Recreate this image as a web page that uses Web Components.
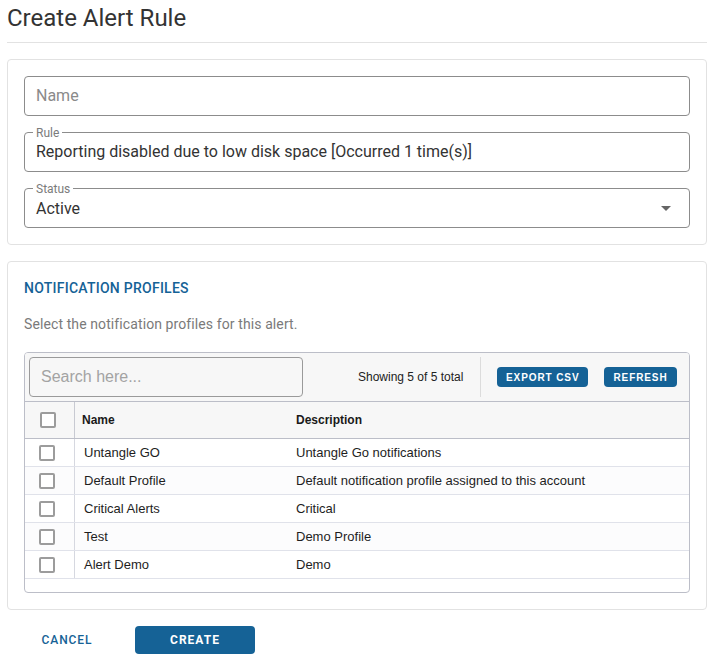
<!DOCTYPE html>
<html>
<head>
<meta charset="utf-8">
<title>Create Alert Rule</title>
<style>
  html, body { margin: 0; background: #fff; }
  body { font-family: Roboto, sans-serif; }
</style>
</head>
<body>
<alert-page>
  <h-title slot="title">Create Alert Rule</h-title>
  <form-card slot="main">
    <text-field placeholder="Name"></text-field>
    <text-field label="Rule" value="Reporting disabled due to low disk space [Occurred 1 time(s)]"></text-field>
    <text-field label="Status" value="Active" select></text-field>
  </form-card>
  <profiles-card slot="main"></profiles-card>
  <app-button slot="actions" variant="text">Cancel</app-button>
  <app-button slot="actions" variant="solid">Create</app-button>
</alert-page>

<script>
class HTitle extends HTMLElement {
  constructor() {
    super();
    this.attachShadow({ mode: 'open' }).innerHTML = `
      <style>
        :host { display: block; font: 400 24px/36px Roboto, sans-serif; color: #333; padding: 0 0 6px; border-bottom: 1px solid #e2e2e2; }
      </style>
      <slot></slot>`;
  }
}
customElements.define('h-title', HTitle);

class AlertPage extends HTMLElement {
  constructor() {
    super();
    this.attachShadow({ mode: 'open' }).innerHTML = `
      <style>
        :host { display: flex; flex-direction: column; padding: 0 10px 0 7px; width: 700px; height: 662px; overflow: hidden; }
        .main { display: flex; flex-direction: column; gap: 16px; margin-top: 16px; }
        .actions { display: flex; align-items: center; gap: 24px; margin-top: 16px; padding-left: 16px; }
      </style>
      <slot name="title"></slot>
      <div class="main"><slot name="main"></slot></div>
      <div class="actions"><slot name="actions"></slot></div>`;
  }
}
customElements.define('alert-page', AlertPage);

class FormCard extends HTMLElement {
  constructor() {
    super();
    this.attachShadow({ mode: 'open' }).innerHTML = `
      <style>
        :host { display: flex; flex-direction: column; gap: 16px; padding: 16px; border: 1px solid #e2e2e2; border-radius: 4px; }
      </style>
      <slot></slot>`;
  }
}
customElements.define('form-card', FormCard);

class TextField extends HTMLElement {
  constructor() {
    super();
    const label = this.getAttribute('label');
    const value = this.getAttribute('value');
    const placeholder = this.getAttribute('placeholder');
    const arrow = this.hasAttribute('select')
      ? '<svg viewBox="0 0 10 5" width="10" height="5"><path d="M0 0h10L5 5z" fill="#666"/></svg>' : '';
    this.attachShadow({ mode: 'open' }).innerHTML = `
      <style>
        :host { display: block; height: 40px; }
        fieldset { box-sizing: border-box; height: 40px; margin: 0; padding: 0 12px 0 7px; border: 1px solid #8c8c8c; border-radius: 4px; display: flow-root; }
        legend { font: 400 12px/12px Roboto, sans-serif; color: #7b7b7b; padding: 0 3px; margin-left: 1px; height: 0; position: relative; top: -6px; }
        .row { display: flex; align-items: center; justify-content: space-between; height: 38px; padding-left: 4px; font: 400 16px/20px Roboto, sans-serif; color: #333; }
        :host([select]) .row span { padding-top: 2px; }
        .ph { color: #8a8a8a; }
        svg { margin-right: 6px; }
      </style>
      <fieldset>
        ${label ? `<legend>${label}</legend>` : ''}
        <div class="row">${value ? `<span>${value}</span>` : `<span class="ph">${placeholder}</span>`}${arrow}</div>
      </fieldset>`;
  }
}
customElements.define('text-field', TextField);

class AppButton extends HTMLElement {
  constructor() {
    super();
    this.attachShadow({ mode: 'open' }).innerHTML = `
      <style>
        :host { display: inline-flex; align-items: center; justify-content: center; box-sizing: border-box; text-transform: uppercase; white-space: nowrap; font: 700 12px/14px Roboto, sans-serif; letter-spacing: 1px; border-radius: 4px; }
        :host([variant=solid]) { background: #156296; color: #fff; width: 120px; height: 28px; }
        :host([variant=text]) { color: #156296; width: 88px; height: 28px; font-weight: 500; letter-spacing: .9px; }
        :host([variant=small]) { background: #156296; color: #fff; height: 20px; padding: 1px 9px 0; font: 700 10px/14px "Liberation Sans", Arial, sans-serif; letter-spacing: .9px; }
      </style>
      <slot></slot>`;
  }
}
customElements.define('app-button', AppButton);

class CheckBox extends HTMLElement {
  constructor() {
    super();
    this.attachShadow({ mode: 'open' }).innerHTML = `
      <style>
        :host { display: block; box-sizing: border-box; width: 16px; height: 16px; border: 2px solid #9c9c9c; border-radius: 2px; background: #fff; }
      </style>`;
  }
}
customElements.define('check-box', CheckBox);

class GridRow extends HTMLElement {
  constructor() {
    super();
    this.attachShadow({ mode: 'open' }).innerHTML = `
      <style>
        :host { display: grid; grid-template-columns: 50px 221px 1fr; height: 28px; box-sizing: border-box; border-bottom: 1px solid #e0e2ea; font: 400 13px/27px "Liberation Sans", Arial, sans-serif; color: #1e1e1e; background: #fff; }
        :host(:nth-child(even)) { background: #fcfcfd; }
        .check { display: flex; align-items: center; justify-content: center; border-right: 1px solid #d6d8e0; padding-right: 5px; }
        .name { padding-left: 9px; }
      </style>
      <div class="check"><check-box></check-box></div>
      <div class="name">${this.getAttribute('name')}</div>
      <div>${this.getAttribute('desc')}</div>`;
  }
}
customElements.define('grid-row', GridRow);

class DataGrid extends HTMLElement {
  constructor() {
    super();
    this.attachShadow({ mode: 'open' }).innerHTML = `
      <style>
        :host { display: block; height: 241px; box-sizing: border-box; border: 1px solid #bcbec8; border-radius: 4px; font-family: "Liberation Sans", Arial, sans-serif; overflow: hidden; }
        .bar { display: flex; align-items: center; height: 49px; box-sizing: border-box; border-bottom: 1px solid #bcbec8; background: #f7f7f7; padding-left: 4px; }
        .search { box-sizing: border-box; width: 274px; height: 40px; border: 1px solid #9a9a9a; border-radius: 4px; padding-left: 11px; font-size: 16px; line-height: 38px; color: #a3a3a3; }
        .count { font-size: 12px; color: #222; margin-left: 55px; width: 122px; }
        .sep { width: 1px; height: 40px; background: #dcdcdc; }
        .btns { display: flex; gap: 16px; margin-left: 16px; }
        .head { display: grid; grid-template-columns: 50px 221px 1fr; height: 37px; box-sizing: border-box; border-bottom: 1px solid #bcbec8; background: #f7f7f7; font-size: 12px; font-weight: 700; line-height: 36px; color: #1a1a1a; }
        .head .check { display: flex; align-items: center; justify-content: center; border-right: 1px solid #c8cad2; padding-right: 4px; }
        .head .name { padding-left: 7px; }
      </style>
      <div class="bar">
        <div class="search">Search here...</div>
        <div class="count">Showing 5 of 5 total</div>
        <div class="sep"></div>
        <div class="btns"><app-button variant="small">Export CSV</app-button><app-button variant="small">Refresh</app-button></div>
      </div>
      <div class="head">
        <div class="check"><check-box></check-box></div>
        <div class="name">Name</div>
        <div>Description</div>
      </div>
      <div class="rows"><slot></slot></div>`;
  }
}
customElements.define('data-grid', DataGrid);

class ProfilesCard extends HTMLElement {
  constructor() {
    super();
    const rows = [
      ['Untangle GO', 'Untangle Go notifications'],
      ['Default Profile', 'Default notification profile assigned to this account'],
      ['Critical Alerts', 'Critical'],
      ['Test', 'Demo Profile'],
      ['Alert Demo', 'Demo']
    ];
    this.attachShadow({ mode: 'open' }).innerHTML = `
      <style>
        :host { display: block; padding: 17px 16px 16px; border: 1px solid #e2e2e2; border-radius: 4px; }
        h2 { margin: 0; font: 500 14px/18px Roboto, sans-serif; letter-spacing: .25px; color: #156296; text-transform: uppercase; }
        p { margin: 18px 0 19px; font: 400 14px/18px Roboto, sans-serif; letter-spacing: .1px; color: #7a7a7a; }
      </style>
      <h2>Notification Profiles</h2>
      <p>Select the notification profiles for this alert.</p>
      <data-grid>${rows.map(r => `<grid-row name="${r[0]}" desc="${r[1]}"></grid-row>`).join('')}</data-grid>`;
  }
}
customElements.define('profiles-card', ProfilesCard);
</script>
</body>
</html>
